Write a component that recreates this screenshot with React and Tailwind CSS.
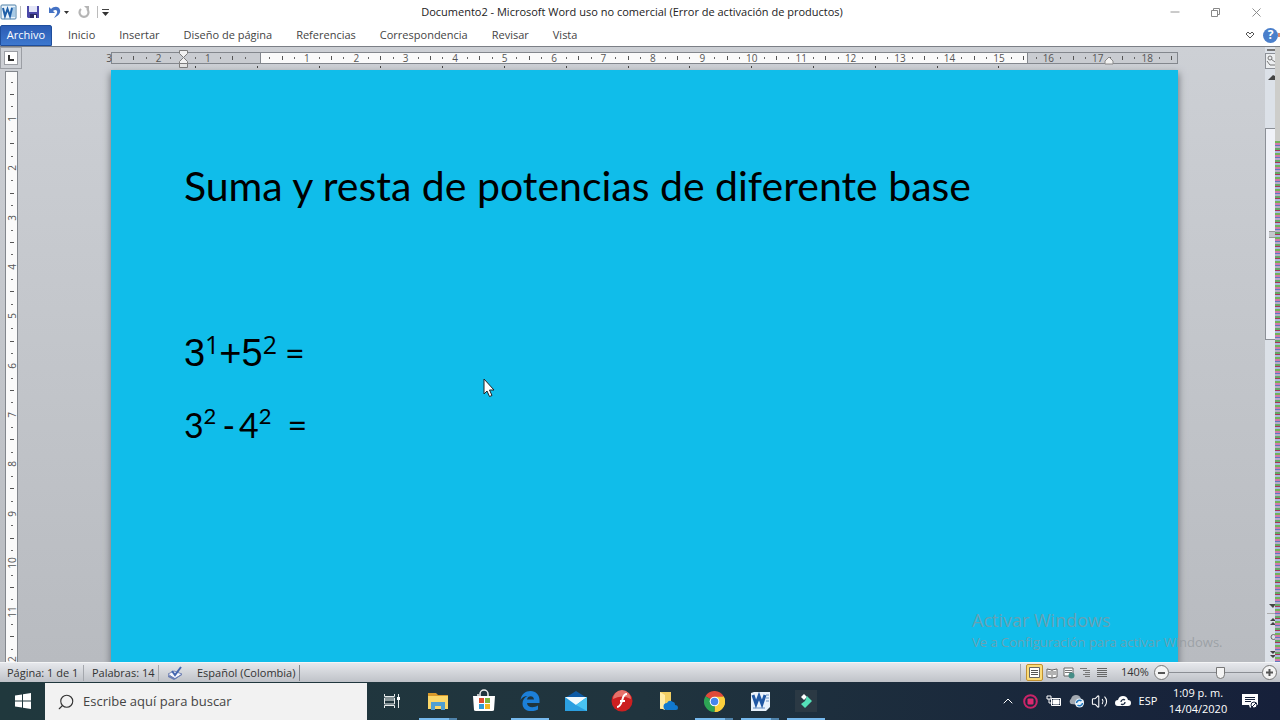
import React, { useState } from 'react';
import { Minus, X, ChevronUp, Volume2, Search } from 'lucide-react';

const tabs = ['Inicio', 'Insertar', 'Diseño de página', 'Referencias', 'Correspondencia', 'Revisar', 'Vista'];

// One cell for every quarter of a centimetre
const horizontalCells = Array.from({ length: 87 }, (_, i) => i);
const verticalCells = Array.from({ length: 48 }, (_, i) => i + 1);

function WordIcon() {
  return (
    <svg width="17" height="16" viewBox="0 0 17 16">
      <rect x="1" y="1" width="15" height="14" rx="1" fill="#eaf3fb" stroke="#4f81a8" />
      <path d="M11 3h4v10h-4z" fill="#a9cbe6" />
      <path d="M3 4l2 8 2.5-7L10 12l2-8" fill="none" stroke="#1f5fa8" strokeWidth="2" />
    </svg>
  );
}

function SaveIcon() {
  return (
    <svg width="14" height="14" viewBox="0 0 14 14">
      <path d="M1 1h12v12H2L1 12z" fill="#4b48a8" />
      <path d="M3 1h8v6H3z" fill="#e4e6f7" />
      <path d="M4 9h7v4H4z" fill="#2c2a66" />
      <path d="M8 10h2v3H8z" fill="#fff" />
    </svg>
  );
}

function UndoIcon() {
  return (
    <svg width="14" height="14" viewBox="0 0 14 14">
      <path d="M1 2v6h6L5 6c2-2 5-1 4 2-.5 2-2 3-3 5 4-2 7-5 6-8-1-4-6-4-9-1z" fill="#4472c4" />
    </svg>
  );
}

function RedoIcon() {
  return (
    <svg width="14" height="14" viewBox="0 0 14 14">
      <path d="M4 4a4.500 4.500 0 1 0 6 0" fill="none" stroke="#b5b5b5" strokeWidth="2.200" />
      <path d="M7 1h5v5z" fill="#b5b5b5" />
    </svg>
  );
}

function HorizontalRuler() {
  return (
    <div className="relative mx-auto mt-[5px] h-[18px] w-[86%]">
      <div className="flex h-3 w-full border border-[#83878d] bg-[#c9ccd1]">
        <div className="w-[14%] border-r border-[#83878d]" />
        <div className="w-[72%] border-r border-[#83878d] bg-[#fafafa]" />
      </div>
      <div className="absolute inset-y-0 right-0 -left-2 flex">
        {horizontalCells.map((i) => (
          <div key={i} className="flex min-w-0 flex-1 flex-col items-center">
            <div className="flex h-3 items-center text-[10px] leading-3 text-[#555]">
              {i % 4 === 0 && i !== 12 && <span>{Math.abs(i / 4 - 3)}</span>}
              {i % 4 === 2 && i !== 6 && <i className="h-1 w-px bg-[#555]" />}
              {i % 2 === 1 && <i className="h-0.5 w-px bg-[#666]" />}
            </div>
            {i % 5 === 2 && i > 2 && i < 73 && <i className="mt-0.5 h-0.5 w-px bg-[#444]" />}
          </div>
        ))}
      </div>
      {/* indent markers */}
      <svg className="absolute -top-1 left-[7%] -ml-2" width="11" height="22" viewBox="0 0 11 22">
        <path d="M1.500 2.500h8v3l-4 4-4-4z" fill="#f2f2f2" stroke="#7c7c7c" />
        <path d="M5.500 9.500l4 4v2h-8v-2z" fill="#f2f2f2" stroke="#7c7c7c" />
        <path d="M1.500 15.500h8v4h-8z" fill="#e4e4e4" stroke="#7c7c7c" />
      </svg>
      <svg className="absolute top-1 right-[6%]" width="10" height="9" viewBox="0 0 10 9">
        <path d="M5 1l4 4v3H1V5z" fill="#f2f2f2" stroke="#8a8a8a" />
      </svg>
    </div>
  );
}

function VerticalRuler() {
  return (
    <div className="flex w-6 flex-col">
      <div className="flex h-[22px] w-[22px] shrink-0 items-center justify-center border border-[#9b9ea4]">
        <button aria-label="Tabulación" className="flex h-[14px] w-[14px] items-center justify-center border border-[#9b9ea4] bg-white">
          <i className="h-[6px] w-[6px] border-b-2 border-l-2 border-[#333]" />
        </button>
      </div>
      <div className="mt-0.5 ml-[5px] flex min-h-0 w-[13px] flex-1 flex-col overflow-hidden border border-b-0 border-[#83878d] bg-[#fafafa] pt-1">
        <div className="-mb-1.5 flex min-h-0 flex-1 flex-col">
          {verticalCells.map((i) => (
            <div key={i} className="flex min-h-0 flex-1 items-center justify-center text-[10px] leading-3 text-[#555]">
              {i % 4 === 0 && <span className="-rotate-90">{i / 4}</span>}
              {i % 4 === 2 && <i className="h-px w-1 bg-[#555]" />}
              {i % 2 === 1 && <i className="h-px w-0.5 bg-[#666]" />}
            </div>
          ))}
        </div>
      </div>
    </div>
  );
}

function ScrollBar() {
  return (
    <div className="flex w-[15px] shrink-0">
      <div className="flex w-2.5 flex-col items-end overflow-hidden bg-[#dce1e8]">
        <i className="mt-0.5 h-0.5 w-2 bg-[#777]" />
        <button aria-label="Regla" className="mt-0.5 flex h-4 w-2.5 items-center border border-r-0 border-[#8c9097] bg-[#eceef0]">
          <svg width="9" height="12" viewBox="0 0 9 12" fill="none" stroke="#777">
            <circle cx="4" cy="3" r="2" />
            <path d="M1 6l3 4h5M5 4l4 3" />
          </svg>
        </button>
        <svg className="mt-1.5 shrink-0" width="7" height="5" viewBox="0 0 7 5"><path d="M0 5l5-5 2 1v4z" fill="#444" /></svg>
        <div className="mt-12 flex h-[212px] w-2.5 shrink-0 items-center justify-end border border-r-0 border-[#8c9097] bg-[#f0f2f8]">
          <i className="h-[7px] w-1.5 border-y border-[#999] bg-[#c4c7cc]" />
        </div>
        <div className="flex-1" />
        <svg width="8" height="60" viewBox="0 0 8 60">
          <path d="M2 2h6v1L6 6z" fill="#444" />
          <path d="M0 11.500h8" stroke="#aaa" />
          <path d="M3 19l3-3 2 2v1zM3 23l3-3 2 2v1z" fill="#444" />
          <circle cx="6.500" cy="35" r="2.500" fill="none" stroke="#666" />
          <path d="M3 49h5v1L6 52zM3 53h5v1L6 56z" fill="#444" />
        </svg>
      </div>
      <div className="flex w-[5px] flex-col bg-[#cdcdca]">
        <div className="h-[94px]" />
        <div className="flex-1 bg-[repeating-linear-gradient(180deg,#71b35a_0_2px,#d07aa8_2px_4px,#5d7ac0_4px_5px,#b9a8c8_5px_7px,#66a865_7px_9px,#a83855_9px_10px,#a9b8e0_10px_12px)]" />
      </div>
    </div>
  );
}

function DocumentPage() {
  return (
    <article className="mx-auto min-h-0 w-[86%] flex-1 overflow-hidden bg-[#10bdea] px-[73px] pt-[91px] text-black shadow-[0_4px_7px_1px_#777b82]">
      <h1 className="font-['Lato',sans-serif] text-[41px] leading-[50px] whitespace-nowrap">
        Suma y resta de potencias de diferente base
      </h1>
      <p className="mt-[117px] flex items-baseline font-['Liberation_Sans',sans-serif] text-[38px] leading-[50px]">
        <span>3</span>
        <sup className="font-['Open_Sans',sans-serif] text-[25px]">1</sup>
        <span>+5</span>
        <sup className="font-['Open_Sans',sans-serif] text-[25px]">2</sup>
        <span className="ml-2 font-['Lato',sans-serif] text-[34px]">=</span>
      </p>
      <p className="mt-[22px] flex items-baseline font-['Lato',sans-serif] text-[34px] leading-[50px]">
        <span>3</span>
        <sup className="-top-3.5 text-[22px]">2</sup>
        <span className="ml-1.5">-</span>
        <span className="ml-1">4</span>
        <sup className="-top-3.5 text-[22px]">2</sup>
        <span className="ml-4">=</span>
      </p>
    </article>
  );
}

function StatusBar() {
  const [zoom, setZoom] = useState(56);

  return (
    <footer className="flex h-5 shrink-0 items-center border-t border-[#f4f5f6] bg-linear-to-b from-[#e6e8ec] to-[#bfc2c8] text-[11px] text-[#333]">
      <span className="w-[84px] border-r border-[#a4a7ad] pl-[7px] leading-4 whitespace-nowrap">Página: 1 de 1</span>
      <span className="w-[75px] border-r border-[#a4a7ad] pl-2 leading-4 whitespace-nowrap">Palabras: 14</span>
      <svg className="ml-2" width="16" height="14" viewBox="0 0 16 14">
        <path d="M1 8l6-3 8 3-7 5z" fill="#f8f8ff" stroke="#7787b5" />
        <path d="M1 9v2l6 3 8-5V8l-7 4z" fill="#6b7eb4" />
        <path d="M5 5l3 4 6-8" fill="none" stroke="#4566b0" strokeWidth="2" />
      </svg>
      <span className="ml-3.5 w-[103px] border-r border-[#83878d] leading-4 whitespace-nowrap">Español (Colombia)</span>
      <div className="flex-1" />
      <div className="flex items-center border-l border-[#a4a7ad] pl-[5px]">
        <button aria-label="Diseño de impresión" className="flex h-[17px] w-[17px] items-center justify-center rounded-xs border border-[#c09030] bg-[#fbdc78]">
          <svg width="11" height="11" viewBox="0 0 11 11"><path d="M.5.5h10v10H.5z" fill="#fff" stroke="#666" /><path d="M2 3.500h7M2 5.500h7M2 7.500h7" stroke="#555" /></svg>
        </button>
        <button aria-label="Lectura" className="flex w-[17px] justify-center">
          <svg width="12" height="12" viewBox="0 0 12 12"><path d="M1 2l5 1 5-1v8l-5 1-5-1z" fill="#fff" stroke="#666" /><path d="M6 3v8M2 5h3M2 7h3M7 5h3M7 7h3" stroke="#666" /></svg>
        </button>
        <button aria-label="Diseño web" className="flex w-[17px] justify-center">
          <svg width="12" height="12" viewBox="0 0 12 12"><path d="M1 1h9v8H1z" fill="#fff" stroke="#666" /><path d="M2 3.500h7M2 5.500h7" stroke="#777" /><circle cx="8.500" cy="8.500" r="3" fill="#458d86" /></svg>
        </button>
        <button aria-label="Esquema" className="flex w-[17px] justify-center">
          <svg width="11" height="11" viewBox="0 0 11 11" stroke="#777"><path d="M0 1.500h7M3 3.500h7M5 5.500h5M3 7.500h7M5 9.500h5" /></svg>
        </button>
        <button aria-label="Borrador" className="flex w-[17px] justify-center">
          <svg width="11" height="11" viewBox="0 0 11 11" stroke="#666"><path d="M0 1.500h10M0 3.500h10M0 5.500h10M0 7.500h10M0 9.500h10" /></svg>
        </button>
      </div>
      <span className="ml-2.5 w-[33px]">140%</span>
      <button aria-label="Alejar" className="flex h-[15px] w-[15px] items-center justify-center rounded-full border border-[#777] bg-[#f4f4f4]">
        <i className="h-0.5 w-[7px] bg-[#555]" />
      </button>
      <input
        type="range"
        aria-label="Zoom"
        value={zoom}
        onChange={(e) => setZoom(Number(e.target.value))}
        className="h-[14px] w-[93px] appearance-none bg-[linear-gradient(#8b8e94,#8b8e94)] bg-[length:100%_1px] bg-center bg-no-repeat [&::-webkit-slider-thumb]:h-3 [&::-webkit-slider-thumb]:w-[9px] [&::-webkit-slider-thumb]:appearance-none [&::-webkit-slider-thumb]:rounded-b-full [&::-webkit-slider-thumb]:border [&::-webkit-slider-thumb]:border-[#777] [&::-webkit-slider-thumb]:bg-[#f4f4f4]"
      />
      <button aria-label="Acercar" className="mr-[3px] flex h-[15px] w-[15px] items-center justify-center rounded-full border border-[#777] bg-[#f4f4f4]">
        <svg width="9" height="9" viewBox="0 0 9 9"><path d="M1 4.500h7M4.500 1v7" stroke="#555" strokeWidth="2" /></svg>
      </button>
    </footer>
  );
}

const apps = [
  {
    name: 'Vista de tareas',
    icon: (
      <svg width="18" height="18" viewBox="0 0 18 18" fill="none" stroke="#e8ecec">
        <path d="M1.500 2v2.500h10V2M1.500 16v-2.500h10V16M1.500 6h10v6h-10zM15.500 2v14" />
        <path d="M2 7h9v2H2z" fill="#8b989b" stroke="none" />
        <path d="M14 5h3v3h-3z" fill="#fff" stroke="none" />
      </svg>
    ),
  },
  {
    name: 'Explorador de archivos',
    open: true,
    stacked: true,
    icon: (
      <svg width="22" height="20" viewBox="0 0 22 20">
        <path d="M1 2h8l2 2h10v3H1z" fill="#d99a2b" />
        <path d="M1 5h20v13H1z" fill="#fbd768" />
        <path d="M4 11h14v8h-4v-4H8v4H4z" fill="#4f9fd2" />
      </svg>
    ),
  },
  {
    name: 'Microsoft Store',
    icon: (
      <svg width="24" height="24" viewBox="0 0 24 24">
        <path d="M8 7V5a4 4 0 0 1 8 0v2M6 7V5" fill="none" stroke="#eee" strokeWidth="1.500" />
        <path d="M1 7h22l-1 14q0 1-2 1H4q-2 0-2-1z" fill="#fff" />
        <path d="M7 9h5v5H7z" fill="#dd4b2e" /><path d="M13 9h5v5h-5z" fill="#7db53c" />
        <path d="M7 15h5v5H7z" fill="#2f9bd6" /><path d="M13 15h5v5h-5z" fill="#f3b71f" />
      </svg>
    ),
  },
  {
    name: 'Edge',
    open: true,
    icon: (
      <svg width="20" height="20" viewBox="0 0 20 20">
        <path d="M.5 9C1.500 3 5.500 0 10.500 0 16 0 19.500 4 19.500 9v3H7c.5 5 7 5 11 2.500v4C11 22 2.500 20 2.500 12.500 2.500 9 4.500 6.500 7.500 5 4.500 5 2 6.500.5 9zM7 8.500h7C14 4 7.500 4 7 8.500z" fill="#1c7fd8" fillRule="evenodd" />
      </svg>
    ),
  },
  {
    name: 'Correo',
    icon: (
      <svg width="24" height="22" viewBox="0 0 24 22">
        <path d="M1 8l11-7 11 7v4H1z" fill="#0d5ba6" />
        <path d="M1 7h22v14H1z" fill="#2b9fe0" />
        <path d="M1 7h22L12 15z" fill="#f2fafd" />
        <path d="M12 15L23 7v14z" fill="#49c3f2" />
      </svg>
    ),
  },
  {
    name: 'Flash Player',
    icon: (
      <svg width="22" height="22" viewBox="0 0 22 22">
        <circle cx="11" cy="11" r="10.500" fill="#cc1f20" />
        <path d="M2 9a9 9 0 0 1 18 0q-9-5-18 0z" fill="#e6716a" />
        <path d="M16 4c-4 0-4 4-5 7s-2 6-5 6M9 11h5" fill="none" stroke="#fff" strokeWidth="2" />
      </svg>
    ),
  },
  {
    name: 'OneDrive',
    icon: (
      <svg width="20" height="20" viewBox="0 0 20 20">
        <path d="M2 1h11v17H2z" fill="#f0cd62" /><path d="M2 1l5 3v15l-5-2z" fill="#ffeba4" />
        <path d="M9 19a3.500 3.500 0 0 1 0-7q2-4 6-1 2 0 2 3 3 0 3 3 0 2-2 2z" fill="#1179cf" />
      </svg>
    ),
  },
  {
    name: 'Chrome',
    open: true,
    stacked: true,
    icon: (
      <svg width="21" height="21" viewBox="0 0 24 24">
        <path d="M12 12L1.600 6A12 12 0 0 1 22.400 6z" fill="#e04a3b" />
        <path d="M12 12L22.400 6A12 12 0 0 1 12 24z" fill="#fbcf3c" />
        <path d="M12 12v12A12 12 0 0 1 1.600 6z" fill="#2da454" />
        <path d="M12 6.500h10.700A12 12 0 0 1 12 24l4.800-9.200z" fill="#fbcf3c" />
        <circle cx="12" cy="12" r="5.500" fill="#fff" /><circle cx="12" cy="12" r="4.300" fill="#4686ec" />
      </svg>
    ),
  },
  {
    name: 'Word',
    open: true,
    stacked: true,
    icon: (
      <svg width="21" height="21" viewBox="0 0 21 21">
        <path d="M1 2l3-1h16v15l-4 4H1z" fill="#e8f1fb" />
        <path d="M16 4h3M16 7h3M16 10h3M3 17h12" stroke="#a8c1df" strokeWidth="2" />
        <path d="M3 4l3 9 3-8 3 8 3-9" fill="none" stroke="#1f57a4" strokeWidth="3" />
      </svg>
    ),
  },
  {
    name: 'Filmora',
    open: true,
    icon: (
      <svg width="22" height="22" viewBox="0 0 22 22">
        <path d="M0 0h22v22H0z" fill="#2b3944" />
        <path d="M9 4l3 3-3 3-3-3z" fill="#fff" /><path d="M12 6l5 5-7 7-4-4 4-3z" fill="#54e0b8" />
      </svg>
    ),
  },
];

function Taskbar() {
  const [query, setQuery] = useState('');

  return (
    <nav className="flex h-[38px] shrink-0 bg-linear-to-r from-[#20383d] via-[#20343e] to-[#16203a] text-white">
      <button aria-label="Inicio" className="flex w-[45px] items-center justify-center">
        <svg width="16" height="16" viewBox="0 0 16 16" fill="#fff"><path d="M0 2.500L7 1.500v6H0zM8 1.300L16 0v7.500H8zM0 8.500h7v6l-7-1zM8 8.500h8V16l-8-1.300z" /></svg>
      </button>
      <label className="mt-px flex w-[322px] items-center bg-[#f2f2f2] pl-3 text-[#333]">
        <Search size={18} strokeWidth={1.5} className="-scale-x-100" />
        <input
          type="text"
          aria-label="Buscar"
          value={query}
          onChange={(e) => setQuery(e.target.value)}
          placeholder="Escribe aquí para buscar"
          className="ml-2 min-w-0 flex-1 text-[13px] outline-none placeholder:text-[#444]"
        />
      </label>
      <div className="ml-0.5 flex">
        {apps.map((app) => (
          <button key={app.name} aria-label={app.name} className="relative flex w-[46px] items-center justify-center">
            {app.icon}
            {app.open && (
              <span className="absolute inset-x-1 bottom-0 flex h-0.5 bg-[#76b9ed]">
                {app.stacked && <i className="ml-auto w-2 bg-[#4f83ab]" />}
              </span>
            )}
          </button>
        ))}
      </div>
      <div className="ml-auto flex items-center pr-[14px]">
        <button aria-label="Iconos ocultos" className="flex w-[23px] justify-center"><ChevronUp size={16} strokeWidth={1.5} /></button>
        <button aria-label="Grabación" className="flex w-[23px] justify-center">
          <svg width="15" height="15" viewBox="0 0 15 15"><circle cx="7.500" cy="7.500" r="6.300" fill="none" stroke="#c92468" strokeWidth="2" /><rect x="4.500" y="4.500" width="6" height="6" rx="1" fill="#dc2a70" /></svg>
        </button>
        <button aria-label="Batería" className="flex w-[23px] justify-center">
          <svg width="16" height="12" viewBox="0 0 16 12" fill="none" stroke="#fff"><path d="M5.500 3.500h9v7h-9zM1 1h4v3H1zM3 4v4h2" /><path d="M7 5h6v4H7z" fill="#fff" /></svg>
        </button>
        <button aria-label="OneDrive" className="flex w-[23px] justify-center">
          <svg width="17" height="14" viewBox="0 0 17 14"><path d="M3 10a3 3 0 0 1 0-5q1-4 5-4t5 4q3 0 3 3t-3 3z" fill="#a3a9b1" /><circle cx="11.500" cy="9" r="4.500" fill="#e9f3fb" /><path d="M8.500 9a3 3 0 0 1 5-2M14.500 9a3 3 0 0 1-5 2" fill="none" stroke="#1c75bd" strokeWidth="1.500" /></svg>
        </button>
        <button aria-label="Volumen" className="flex w-[23px] justify-center"><Volume2 size={17} strokeWidth={1.5} /></button>
        <button aria-label="Sincronización" className="flex w-[23px] justify-center">
          <svg width="16" height="12" viewBox="0 0 16 12"><path d="M3 11a3 3 0 0 1 0-6q1-4 5-4t5 4q3 0 3 3t-3 3z" fill="#fff" /><path d="M6 7a2.500 2.500 0 0 1 4-2M10 7a2.500 2.500 0 0 1-4 2" fill="none" stroke="#1b2a40" strokeWidth="1.300" /></svg>
        </button>
        <button className="w-7 text-center text-[11px]">ESP</button>
        <button className="w-[72px] text-center text-[11px] leading-4 whitespace-nowrap">
          1:09 p. m.
          <br />
          14/04/2020
        </button>
        <button aria-label="Notificaciones" className="flex w-8 justify-center">
          <svg width="16" height="16" viewBox="0 0 16 16"><path d="M0 1h16v11h-5l-3 3-1-3H0z" fill="#fff" /><path d="M3 4.500h10M3 6.500h10M3 8.500h6" stroke="#17223a" /><circle cx="12" cy="12" r="3" fill="#fff" stroke="#17223a" /><path d="M10 14l4-4" stroke="#17223a" /></svg>
        </button>
      </div>
    </nav>
  );
}

export default function App() {
  return (
    <div className="flex h-screen flex-col overflow-hidden bg-white font-['Open_Sans',sans-serif]">
      <header className="shrink-0">
        <div className="flex h-6 items-center justify-between">
          <div className="flex flex-1 items-center">
            <WordIcon />
            <i className="mx-[3px] h-3 w-px bg-[#bbb]" />
            <button aria-label="Guardar" className="ml-0.5"><SaveIcon /></button>
            <button aria-label="Deshacer" className="ml-2"><UndoIcon /></button>
            <svg className="ml-0.5" width="5" height="3" viewBox="0 0 5 3"><path d="M0 0h5L2.500 3z" fill="#333" /></svg>
            <button aria-label="Rehacer" className="ml-2"><RedoIcon /></button>
            <i className="mr-1 ml-1.5 h-3 w-px bg-[#bbb]" />
            <button aria-label="Personalizar">
              <svg width="7" height="7" viewBox="0 0 7 7"><path d="M0 .5h7" stroke="#444" /><path d="M0 3h7L3.500 7z" fill="#333" /></svg>
            </button>
          </div>
          <span className="text-[11px] text-[#222]">Documento2 - Microsoft Word uso no comercial (Error de activación de productos)</span>
          <div className="flex flex-1 items-center justify-end gap-7 pr-4 text-[#888]">
            <button aria-label="Minimizar"><Minus size={14} strokeWidth={1.5} /></button>
            <button aria-label="Restaurar">
              <svg width="11" height="11" viewBox="0 0 11 11" fill="none" stroke="#888"><path d="M1.500 3.500h6v6h-6zM3.500 3.500v-2h6v6h-2" /></svg>
            </button>
            <button aria-label="Cerrar"><X size={15} strokeWidth={1.5} /></button>
          </div>
        </div>
        <div className="flex h-[22px] items-center text-[11px] text-[#444]">
          <button className="mr-1 h-[21px] w-[52px] rounded-t-xs border border-[#1f4e9c] bg-linear-to-b from-[#2c5cb4] to-[#3d78cf] text-white">Archivo</button>
          {tabs.map((tab) => (
            <button key={tab} className="px-3">{tab}</button>
          ))}
          <button aria-label="Minimizar la cinta" className="ml-auto">
            <svg width="10" height="8" viewBox="0 0 10 8"><path d="M1 3l2-2 2 2 2-2 2 2-4 4z" fill="none" stroke="#555" /></svg>
          </button>
          <button aria-label="Ayuda" className="ml-2 flex h-[15px] w-[15px] items-center justify-center rounded-full bg-[#4a7fcb] text-xs font-bold text-white">?</button>
          <i className="h-1 w-0.5 bg-[#d88a70]" />
        </div>
      </header>

      <main className="relative flex min-h-0 flex-1 border-t border-[#7b7f86] bg-linear-to-b from-[#cdd0d5] to-[#b8bbc0] text-[#444]">
        <VerticalRuler />
        <section className="flex min-w-0 flex-1 flex-col overflow-hidden">
          <HorizontalRuler />
          <DocumentPage />
        </section>
        <ScrollBar />

        <svg className="absolute top-[331px] left-[483px]" width="12" height="20" viewBox="0 0 12 20">
          <path d="M1 1v15l3-3 2.500 5.500 2.500-1L6.500 12H11z" fill="#fff" stroke="#222" />
        </svg>
        <div className="pointer-events-none absolute right-[50px] bottom-2.5 w-[258px] whitespace-nowrap text-[#8f959a]/70">
          <p className="text-lg leading-6">Activar Windows</p>
          <p className="text-[13px] leading-5">Ve a Configuración para activar Windows.</p>
        </div>
      </main>

      <StatusBar />
      <Taskbar />
    </div>
  );
}
